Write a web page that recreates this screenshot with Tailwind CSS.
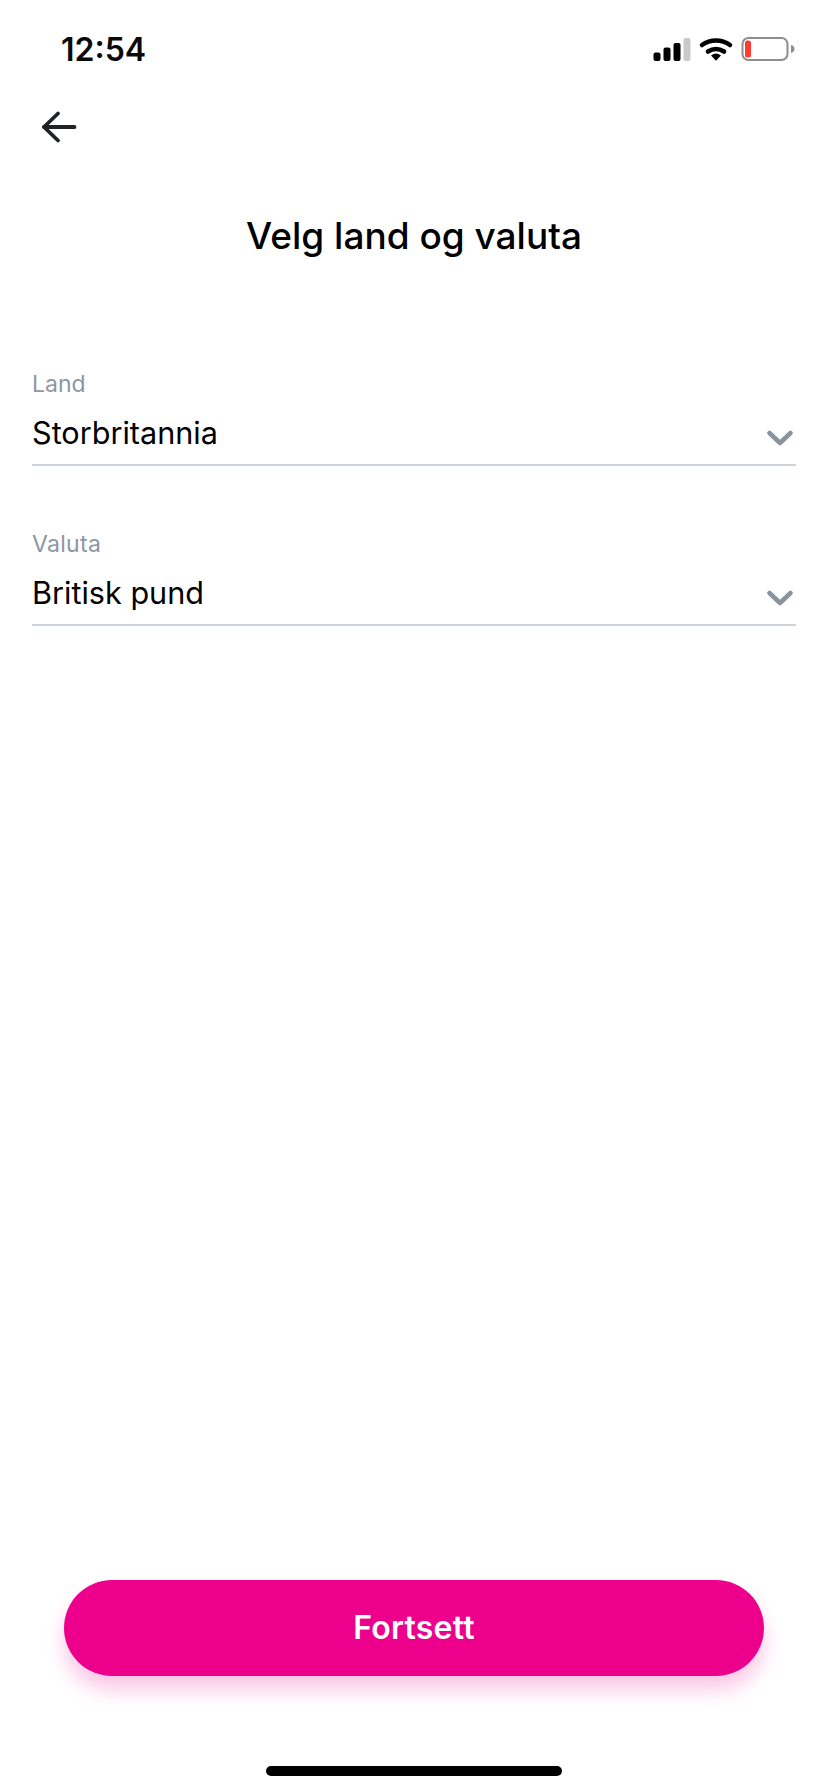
<!DOCTYPE html>
<html lang="no">
<head>
<meta charset="utf-8">
<title>Velg land og valuta</title>
<script src="https://cdn.jsdelivr.net/npm/@tailwindcss/browser@4"></script>
</head>
<body class="bg-white">
<div class="w-[828px] h-[1792px] flex flex-col bg-white font-['Inter',sans-serif] overflow-hidden">
  <div class="h-[100px] shrink-0 flex justify-between items-start pl-[61px]">
    <span class="mt-[30px] text-[32px] leading-[40px] font-semibold text-[#0a0a0a]">12:54</span>
    <svg class="mt-[30px] mr-[32px]" width="146" height="40" viewBox="650 30 146 40" fill="none">
      <rect x="653.5" y="52.5" width="7" height="8.5" rx="2" fill="#000"/>
      <rect x="663.5" y="47.5" width="7" height="13.5" rx="2" fill="#000"/>
      <rect x="673.5" y="43" width="7" height="18" rx="2" fill="#000"/>
      <rect x="683.5" y="38" width="7" height="23" rx="2" fill="#c9c9c9"/>
      <path d="M702 45a24 24 0 0 1 28 0" stroke="#000" stroke-width="4.600" stroke-linecap="round"/>
      <path d="M708 51.500a15 15 0 0 1 16 0" stroke="#000" stroke-width="4.600" stroke-linecap="round"/>
      <path d="M711 55.500 716 60.800 721 55.500a8 8 0 0 0-10 0Z" fill="#000"/>
      <rect x="742.500" y="38" width="45" height="22" rx="6" stroke="#8e8e8e" stroke-width="2"/>
      <rect x="745" y="40.500" width="6" height="17" rx="2.500" fill="#ff3b30"/>
      <path d="M791 45c2.500 .6 3.500 2.200 3.500 4s-1 3.400-3.500 4Z" fill="#8e8e8e"/>
    </svg>
  </div>
  <div class="h-[80px] shrink-0 pl-[40px] pt-[8px]">
    <svg width="38" height="38" viewBox="40 108 38 38" fill="none" stroke="#1f2328" stroke-width="3.800" stroke-linecap="round" stroke-linejoin="round">
      <path d="M74.500 127H44"/>
      <path d="M58 113.500 44 127l14 13.500"/>
    </svg>
  </div>
  <h1 class="mt-[32px] h-[48px] text-center text-[37px] leading-[48px] font-medium text-black">Velg land og valuta</h1>
  <div class="mt-[111px] px-[32px] flex flex-col gap-[65px]">
    <div class="h-[95px] border-b-2 border-[#cdd2dc] flex flex-col">
      <span class="text-[23px] leading-[26px] text-[#8d96a3]">Land</span>
      <div class="mt-[16px] flex justify-between items-center">
        <span class="text-[30.6px] leading-[40px] text-black">Storbritannia</span>
        <svg class="mr-[2px] mt-[12px]" width="28" height="18" viewBox="0 0 28 18" fill="none" stroke="#8a929e" stroke-width="4.500" stroke-linecap="round" stroke-linejoin="round"><path d="M3.500 3 14 13 24.500 3"/></svg>
      </div>
    </div>
    <div class="h-[95px] border-b-2 border-[#cdd2dc] flex flex-col">
      <span class="text-[23px] leading-[26px] tracking-[0.3px] text-[#8d96a3]">Valuta</span>
      <div class="mt-[16px] flex justify-between items-center">
        <span class="text-[30.6px] leading-[40px] text-black">Britisk pund</span>
        <svg class="mr-[2px] mt-[12px]" width="28" height="18" viewBox="0 0 28 18" fill="none" stroke="#8a929e" stroke-width="4.500" stroke-linecap="round" stroke-linejoin="round"><path d="M3.500 3 14 13 24.500 3"/></svg>
      </div>
    </div>
  </div>
  <div class="mt-auto px-[64px]">
    <button class="w-full h-[96px] rounded-full bg-[#ec008c] text-white text-[32px] font-semibold tracking-[0.2px] shadow-[0_14px_20px_rgba(236,0,140,0.22)]">Fortsett</button>
  </div>
  <div class="mt-[90px] mb-[16px] mx-auto w-[296px] h-[10px] rounded-full bg-black"></div>
</div>
</body>
</html>
